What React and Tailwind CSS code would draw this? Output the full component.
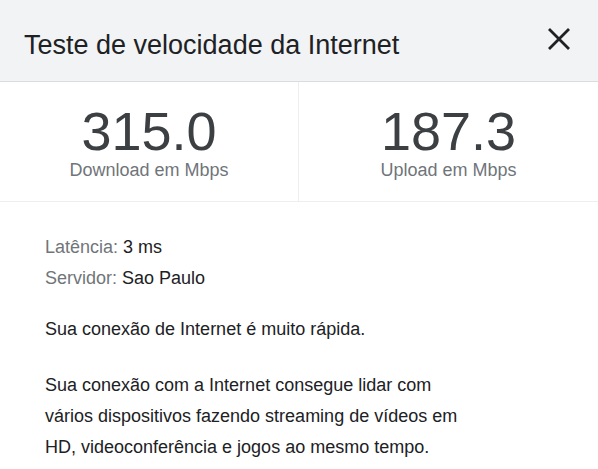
export default function App() {
  return (
    <div
      className="min-h-screen w-full bg-white text-[#202124]"
      style={{ fontFamily: '"Liberation Sans", Arial, sans-serif' }}
    >
      <header className="flex h-[82px] items-start justify-between border-b border-[#dadce0] bg-[#f1f3f4] pl-6 pr-[24px]">
        <h1 className="mt-[29px] text-[27px] leading-[32px] text-[#202124]">Teste de velocidade da Internet</h1>
        <button type="button" className="mt-[24px] flex h-[30px] w-[30px] items-center justify-center" aria-label="Fechar">
          <svg width="22" height="22" viewBox="0 0 22 22" fill="none" stroke="#202124" strokeWidth="2.8">
            <path d="M1 1 L21 21 M21 1 L1 21" />
          </svg>
        </button>
      </header>

      <div className="grid grid-cols-2 border-b border-[#eeeeee]">
        <div className="flex h-[119px] flex-col items-center border-r border-[#eeeeee] pt-[22px]">
          <span className="text-[54px] leading-[54px] text-[#3c4043]">315.0</span>
          <span className="mt-[1px] text-[18px] leading-[22px] text-[#70757a]">Download em Mbps</span>
        </div>
        <div className="flex h-[119px] flex-col items-center pt-[22px]">
          <span className="text-[54px] leading-[54px] text-[#3c4043]">187.3</span>
          <span className="mt-[1px] text-[18px] leading-[22px] text-[#70757a]">Upload em Mbps</span>
        </div>
      </div>

      <section className="px-[45px] pt-[30px] text-[18px] leading-[31px] text-[#202124]">
        <div>
          <p>
            <span className="text-[#70757a]">Latência:</span> 3 ms
          </p>
          <p>
            <span className="text-[#70757a]">Servidor:</span> Sao Paulo
          </p>
        </div>
        <p className="mt-[20px]">Sua conexão de Internet é muito rápida.</p>
        <p className="mt-[25px] max-w-[430px]">
          Sua conexão com a Internet consegue lidar com vários dispositivos fazendo streaming de vídeos em HD,
          videoconferência e jogos ao mesmo tempo.
        </p>
      </section>
    </div>
  )
}
